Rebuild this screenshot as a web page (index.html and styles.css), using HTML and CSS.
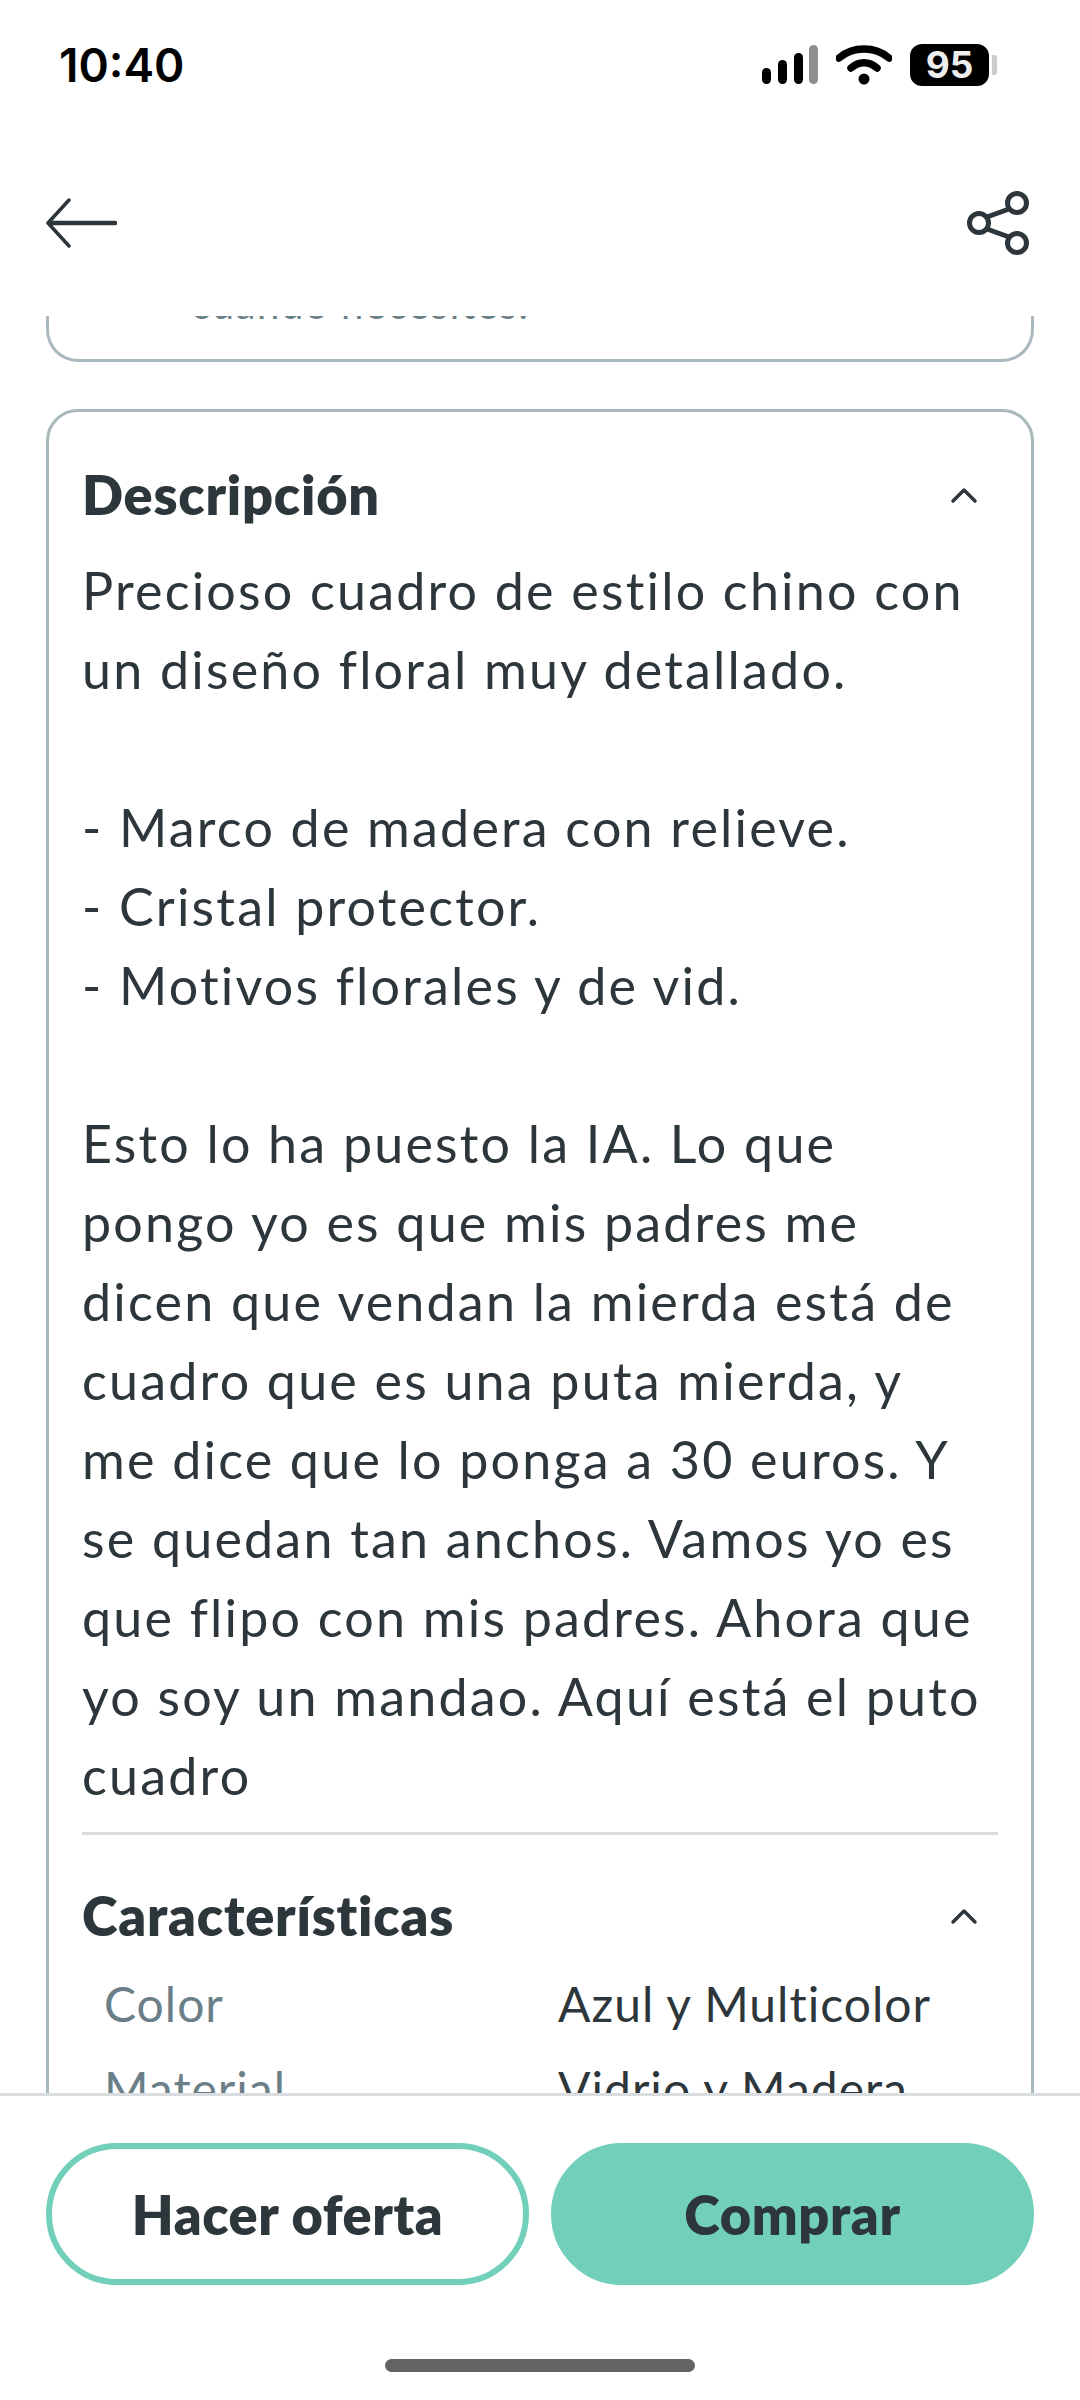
FILE: index.html
```html
<!DOCTYPE html>
<html lang="es">
<head>
    <meta charset="UTF-8">
    <meta name="viewport" content="width=device-width, initial-scale=1.0">
    <title>Descripción</title>
    <link rel="stylesheet" href="styles.css">
</head>
<body>
    <div class="phone">
        <!-- Barra de estado -->
        <div class="statusbar">
            <span class="time">10:40</span>
            <div class="status-icons">
                <svg class="signal" width="56" height="40" viewBox="0 0 56 40">
                    <rect x="0" y="23" width="9" height="16" rx="4.5" fill="#000"/>
                    <rect x="16" y="15" width="9" height="24" rx="4.5" fill="#000"/>
                    <rect x="32" y="8" width="9" height="31" rx="4.5" fill="#000"/>
                    <rect x="47" y="0" width="9" height="39" rx="4.5" fill="#8e8e8e"/>
                </svg>
                <svg class="wifi" width="56" height="40" viewBox="0 0 56 40">
                    <path d="M3 13 C17 1 39 1 53 13" fill="none" stroke="#000" stroke-width="7.5" stroke-linecap="round"/>
                    <path d="M15 23 C23 16 33 16 41 23" fill="none" stroke="#000" stroke-width="7.5" stroke-linecap="round"/>
                    <circle cx="28" cy="34" r="5.5" fill="#000"/>
                </svg>
                <div class="battery">
                    <span class="battery-level">95</span>
                    <span class="battery-cap"></span>
                </div>
            </div>
        </div>

        <!-- Cabecera -->
        <div class="topbar">
            <svg width="72" height="50" viewBox="0 0 72 50">
                <path d="M24 2 L3 25 L24 48" fill="none" stroke="#2d363a" stroke-width="3.5" stroke-linecap="round" stroke-linejoin="round"/>
                <path d="M4 25 H70" fill="none" stroke="#2d363a" stroke-width="4.5" stroke-linecap="round"/>
            </svg>
            <svg width="64" height="64" viewBox="0 0 64 64">
                <g fill="none" stroke="#2d363a" stroke-width="5">
                    <circle cx="12" cy="32" r="9.5"/>
                    <circle cx="50" cy="12" r="9.5"/>
                    <circle cx="50" cy="52" r="9.5"/>
                    <path d="M20 26 L42 18 M20 38 L42 46"/>
                </g>
            </svg>
        </div>

        <!-- Contenido -->
        <div class="scroll">
            <div class="card card-prev">
                <span class="prev-text">cuando necesites.</span>
            </div>

            <div class="card">
                <div class="section-head">
                    <h2>Descripción</h2>
                    <svg width="28" height="18" viewBox="0 0 28 18"><path d="M3 15 L14 4 L25 15" fill="none" stroke="#2d363a" stroke-width="3.5" stroke-linecap="round" stroke-linejoin="round"/></svg>
                </div>
                <p class="description">Precioso cuadro de estilo chino con
un diseño floral muy detallado.

- Marco de madera con relieve.
- Cristal protector.
- Motivos florales y de vid.

Esto lo ha puesto la IA. Lo que
pongo yo es que mis padres me
dicen que vendan la mierda está de
cuadro que es una puta mierda, y
me dice que lo ponga a 30 euros. Y
se quedan tan anchos. Vamos yo es
que flipo con mis padres. Ahora que
yo soy un mandao. Aquí está el puto
cuadro</p>
                <div class="divider"></div>
                <div class="section-head section-head-2">
                    <h2>Características</h2>
                    <svg width="28" height="18" viewBox="0 0 28 18"><path d="M3 15 L14 4 L25 15" fill="none" stroke="#2d363a" stroke-width="3.5" stroke-linecap="round" stroke-linejoin="round"/></svg>
                </div>
                <div class="attrs">
                    <span class="attr-name">Color</span>
                    <span class="attr-value">Azul y Multicolor</span>
                    <span class="attr-name">Material</span>
                    <span class="attr-value">Vidrio y Madera</span>
                </div>
            </div>
        </div>

        <!-- Botones -->
        <div class="footer">
            <div class="buttons">
                <button class="btn btn-outline">Hacer oferta</button>
                <button class="btn btn-fill">Comprar</button>
            </div>
            <div class="home-bar"></div>
        </div>
    </div>
</body>
</html>
```

FILE: styles.css
```css
body {
    margin: 0;
    font-family: "Lato", "Liberation Sans", sans-serif;
    background: #fff;
    color: #2d363a;
}

.phone {
    width: 1080px;
    height: 2400px;
    display: flex;
    flex-direction: column;
    overflow: hidden;
}

/* Barra de estado */
.statusbar {
    height: 130px;
    display: flex;
    justify-content: space-between;
    align-items: center;
    padding: 0 83px 0 59px;
    box-sizing: border-box;
}

.time {
    font-family: "Inter", sans-serif;
    font-size: 46px;
    font-weight: 600;
    color: #000;
}

.status-icons {
    display: flex;
    align-items: center;
    gap: 18px;
}

.battery {
    display: flex;
    align-items: center;
    gap: 3px;
}

.battery-level {
    width: 79px;
    height: 42px;
    line-height: 42px;
    background: #000;
    border-radius: 12px;
    color: #eee;
    font-family: "Inter", sans-serif;
    font-size: 37px;
    font-weight: 700;
    text-align: center;
}

.battery-cap {
    width: 5px;
    height: 20px;
    background: #ccc;
    border-radius: 0 3px 3px 0;
}

/* Cabecera */
.topbar {
    height: 186px;
    display: flex;
    justify-content: space-between;
    align-items: center;
    padding: 0 49px 0 45px;
    box-sizing: border-box;
}

/* Contenido */
.scroll {
    flex: 1;
    min-height: 0;
    overflow: hidden;
    padding: 0 46px;
    display: flex;
    flex-direction: column;
    gap: 47px;
}

.card {
    border: 3px solid #a9b8bc;
    border-radius: 32px;
    padding: 34px 33px;
    flex-shrink: 0;
}

.card-prev {
    height: 46px;
    box-sizing: border-box;
    border-top: none;
    border-radius: 0 0 32px 32px;
    padding: 0 0 0 142px;
    overflow: hidden;
}

.prev-text {
    display: block;
    font-size: 40px;
    line-height: 14px;
    margin-top: -19px;
    letter-spacing: 1.6px;
    color: #6b7f88;
}

.section-head {
    display: flex;
    justify-content: space-between;
    align-items: center;
    padding-right: 20px;
    height: 50px;
    margin-top: 24px;
}

.section-head h2 {
    margin: 0;
    font-size: 54px;
    font-weight: 800;
    line-height: 50px;
    letter-spacing: 0.8px;
}

.description {
    margin: 31px 0 0;
    font-size: 52px;
    letter-spacing: 2.2px;
    line-height: 79px;
    white-space: pre-line;
}

.divider {
    height: 3px;
    background: #d9dde0;
    margin-top: 17px;
}

.section-head-2 {
    margin-top: 56px;
}

.attrs {
    display: grid;
    grid-template-columns: 454px 1fr;
    grid-auto-rows: 85px;
    padding: 20px 0 0 22px;
    font-size: 48px;
    letter-spacing: 1px;
    line-height: 85px;
}

.attr-name {
    color: #6b7f88;
}

/* Botones */
.footer {
    height: 307px;
    flex-shrink: 0;
    border-top: 3px solid #d9dde0;
    box-sizing: border-box;
    background: #fff;
    padding: 47px 46px 0;
    display: flex;
    flex-direction: column;
    align-items: center;
}

.buttons {
    width: 100%;
    display: flex;
    gap: 22px;
}

.btn {
    flex: 1;
    height: 142px;
    border-radius: 71px;
    font-family: inherit;
    font-size: 54px;
    font-weight: 800;
    letter-spacing: 0.6px;
    color: #2d363a;
    border: 6px solid #71cfba;
    background: #fff;
}

.btn-fill {
    background: #71cfba;
}

.home-bar {
    width: 310px;
    height: 13px;
    border-radius: 7px;
    background: #636366;
    margin-top: 74px;
}
```
